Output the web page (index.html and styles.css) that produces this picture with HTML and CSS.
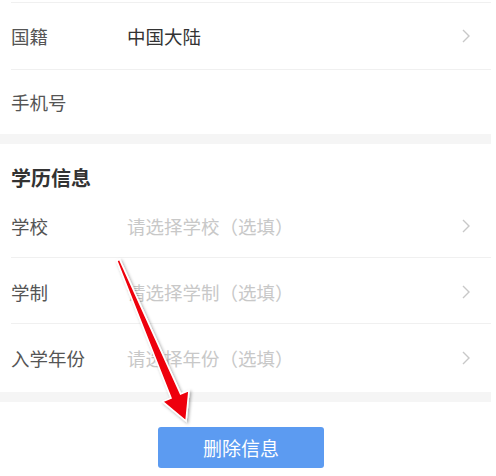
FILE: index.html
```html
<!DOCTYPE html>
<html lang="zh-CN">
<head>
<meta charset="utf-8">
<title>学历信息</title>
<link rel="stylesheet" href="styles.css">
</head>
<body>
<div class="page">
  <div class="group">
    <div class="stub"></div>
    <div class="row r-nat">
      <span class="label">国籍</span>
      <span class="value">中国大陆</span>
      <svg class="chev" viewBox="0 0 8 14" width="8" height="14"><path d="M1 1 L7 7 L1 13" fill="none" stroke="#c8c8c8" stroke-width="1.4"/></svg>
    </div>
    <div class="row r-phone">
      <span class="label">手机号</span>
    </div>
  </div>
  <div class="band"></div>
  <div class="group">
    <div class="heading">学历信息</div>
    <div class="row r-school nob">
      <span class="label">学校</span>
      <span class="value ph">请选择学校（选填）</span>
      <svg class="chev" viewBox="0 0 8 14" width="8" height="14"><path d="M1 1 L7 7 L1 13" fill="none" stroke="#c8c8c8" stroke-width="1.4"/></svg>
    </div>
    <div class="row r-sys">
      <span class="label">学制</span>
      <span class="value ph">请选择学制（选填）</span>
      <svg class="chev" viewBox="0 0 8 14" width="8" height="14"><path d="M1 1 L7 7 L1 13" fill="none" stroke="#c8c8c8" stroke-width="1.4"/></svg>
    </div>
    <div class="row r-year">
      <span class="label">入学年份</span>
      <span class="value ph">请选择年份（选填）</span>
      <svg class="chev" viewBox="0 0 8 14" width="8" height="14"><path d="M1 1 L7 7 L1 13" fill="none" stroke="#c8c8c8" stroke-width="1.4"/></svg>
    </div>
  </div>
  <div class="band"></div>
  <div class="actions">
    <button class="btn">删除信息</button>
  </div>
  <svg class="arrow" viewBox="0 0 496 476" width="496" height="476">
    <defs>
      <filter id="sh" x="-20%" y="-20%" width="140%" height="140%">
        <feDropShadow dx="1.5" dy="1.5" stdDeviation="1.5" flood-color="#000" flood-opacity="0.35"/>
      </filter>
    </defs>
    <polygon points="116.8,260.8 119.6,259.4 180.6,393.9 189,390.4 186,421 162.6,401.6 171,398" fill="#ee0008" stroke="#ffffff" stroke-width="1.6" stroke-linejoin="miter" filter="url(#sh)"/>
  </svg>
</div>
</body>
</html>
```
FILE: styles.css
```css
* { box-sizing: border-box; }
html, body { margin: 0; padding: 0; background: #ffffff; }
body {
  font-family: "Noto Sans CJK SC", "Noto Sans", sans-serif;
  width: 496px;
  height: 476px;
  overflow: hidden;
}
.page {
  position: relative;
  width: 491px;
  height: 476px;
}
.group {
  padding-left: 11px;
  background: #ffffff;
}
.stub { height: 2px; }
.row {
  display: flex;
  align-items: center;
  border-top: 1px solid #f0f0f0;
  padding-right: 21px;
  font-size: 18.5px;
}
.row.nob { border-top: none; }
.r-nat { height: 67px; }
.r-phone { height: 65px; }
.r-school { height: 63px; }
.r-sys { height: 66px; padding-top: 2px; }
.r-year { height: 69px; }
.label {
  width: 116px;
  color: #555555;
  flex-shrink: 0;
}
.value {
  flex: 1;
  color: #333333;
}
.value.ph { color: #c8c8c8; }
.chev { margin-left: auto; flex-shrink: 0; }
.band {
  height: 10px;
  background: #f5f5f5;
}
.heading {
  padding-top: 22px;
  height: 50px;
  font-size: 20px;
  line-height: 24px;
  font-weight: 700;
  color: #333333;
}
.actions {
  display: flex;
  padding-top: 25px;
  padding-left: 158px;
}
.btn {
  width: 166px;
  height: 41px;
  border: none;
  border-radius: 3px;
  background: #5c9bf1;
  color: #ffffff;
  font-family: "Noto Sans CJK SC", "Noto Sans", sans-serif;
  font-size: 19px;
  padding: 0;
}
.arrow {
  position: absolute;
  left: 0;
  top: 0;
  pointer-events: none;
}
```
